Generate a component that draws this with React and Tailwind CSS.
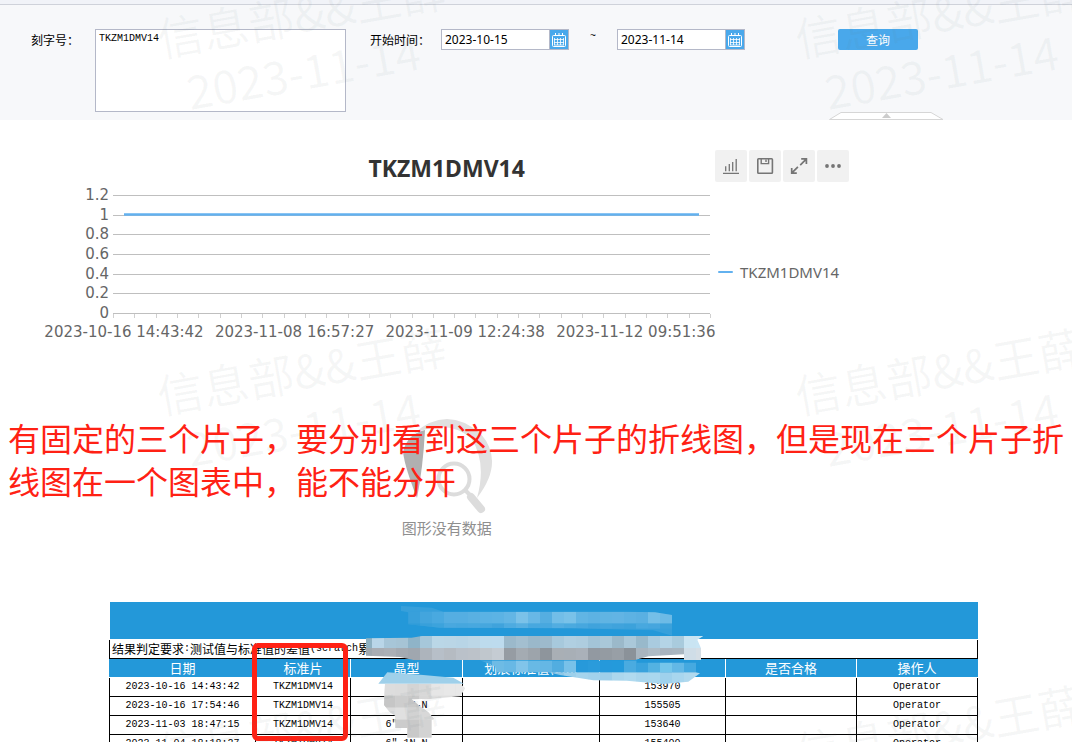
import React, { useState } from "react";

const axisLabels = [
  "2023-10-16 14:43:42",
  "2023-11-08 16:57:27",
  "2023-11-09 12:24:38",
  "2023-11-12 09:51:36",
];

const gridLines = [
  { value: "1.2", y: 13 },
  { value: "1", y: 33 },
  { value: "0.8", y: 52 },
  { value: "0.6", y: 72 },
  { value: "0.4", y: 92 },
  { value: "0.2", y: 111 },
  { value: "0", y: 131 },
];

const columns = ["日期", "标准片", "晶型", "划痕标准值(um)", "", "是否合格", "操作人"];

const records = [
  { date: "2023-10-16 14:43:42", piece: "TKZM1DMV14", type: "", value: "153970", user: "Operator" },
  { date: "2023-10-16 17:54:46", piece: "TKZM1DMV14", type: "6″ 1N-N", value: "155505", user: "Operator" },
  { date: "2023-11-03 18:47:15", piece: "TKZM1DMV14", type: "6″ 1N  ", value: "153640", user: "Operator" },
  { date: "2023-11-04 18:18:27", piece: "TKZM1DMV14", type: "6″ 1N-N", value: "155400", user: "Operator" },
];

const CalendarIcon = () => (
  <svg viewBox="0 0 14 14" className="h-[14px] w-[14px]" fill="none" stroke="#fff">
    <rect x="0.5" y="2.5" width="13" height="11" rx="1" />
    <path d="M3.5 0v3M7 0v3M10.5 0v3" />
    <path d="M2 6.5h10M2 9.5h10M2 12h10M2.5 5v7M5.5 5v7M8.5 5v7M11.5 5v7" strokeWidth="0.8" />
  </svg>
);

const DateField = ({ id, label, value, onChange }) => (
  <div className="flex h-[21px] w-32 border border-[#b4b8c8] bg-white">
    <input
      id={id}
      type="text"
      aria-label={label}
      value={value}
      onChange={(e) => onChange(e.target.value)}
      className="min-w-0 flex-1 px-[3px] font-['Noto_Sans'] text-xs text-black outline-none"
    />
    <button
      type="button"
      aria-label="选择日期"
      className="flex w-[19px] items-center justify-center border-l border-[#b4b8c8] bg-[#49a8eb]"
    >
      <CalendarIcon />
    </button>
  </div>
);

const ToolButton = ({ label, children }) => (
  <button type="button" aria-label={label} className="h-8 w-8 rounded-xs bg-[#f1f1f1]">
    <svg viewBox="0 0 32 32" className="h-8 w-8" fill="none" stroke="#757575" strokeWidth="1.4">
      {children}
    </svg>
  </button>
);

const Toolbar = () => (
  <div className="flex gap-[2px]">
    <ToolButton label="图表类型">
      <path d="M10.7 16.3v5M14.3 14v7.3M17.7 12v9.3M21.2 9v12.3M8 23.3h16" strokeWidth="1.3" />
    </ToolButton>
    <ToolButton label="导出图片">
      <rect x="8.8" y="8.8" width="14.6" height="14.4" rx="0.8" strokeWidth="1.6" />
      <path d="M12.2 9v4.6h7.4V9M17 9.5v2.6" />
    </ToolButton>
    <ToolButton label="全屏">
      <path d="M18.2 8.9h5.2v5.2M23.2 9.1l-6 6M13.8 23.1H8.7v-5.2M8.9 22.9l6-6" strokeWidth="1.7" />
    </ToolButton>
    <ToolButton label="更多">
      <g fill="#757575" stroke="none">
        <circle cx="10" cy="16" r="1.9" />
        <circle cx="16" cy="16" r="1.9" />
        <circle cx="22" cy="16" r="1.9" />
      </g>
    </ToolButton>
  </div>
);

const LineChart = () => (
  <svg viewBox="0 0 686 180" className="h-[180px] w-[686px] shrink-0 font-['DejaVu_Sans'] text-[15px]">
    {gridLines.map((line) => (
      <g key={line.value}>
        <rect x="81" y={line.y} width="597" height="1" fill="#bfbfbf" />
        <text x="77" y={line.y + 5} textAnchor="end" fill="#666">
          {line.value}
        </text>
      </g>
    ))}
    {Array.from({ length: 29 }).map((_, i) => (
      <rect key={i} x={81 + Math.round((i * 597) / 28)} y="132" width="1" height="4" fill="#d0d0d0" />
    ))}
    {axisLabels.map((label, i) => (
      <text key={label} x={92 + i * 170.6} y="155" textAnchor="middle" fill="#666">
        {label}
      </text>
    ))}
    <path d="M92 32.5H667" stroke="#62b1ef" strokeWidth="2.4" />
  </svg>
);

const EmptyChart = () => (
  <div className="flex flex-col items-center gap-1 pt-14">
    <svg viewBox="0 0 92 96" className="h-24 w-[92px]" fill="none">
      <path d="M2 34Q4 50 16 80Q22 50 24 12Q6 16 2 34Z" fill="#b0b0b0" />
      <path d="M12 16Q46-14 80 16Q104 44 76 80Q86 44 70 20Q46 0 12 16Z" fill="#e0e0e0" />
      <circle cx="53" cy="61" r="15.5" stroke="#dcdcdc" strokeWidth="4" />
      <path d="M64 72l6 6" stroke="#dcdcdc" strokeWidth="4" />
      <path d="M70 79l10 12" stroke="#dcdcdc" strokeWidth="8" strokeLinecap="round" />
    </svg>
    <p className="text-[15px] leading-5 text-[#8f8f8f]">图形没有数据</p>
  </div>
);

// one row of 36-unit blocks
const Blocks = ({ x, y, h = 36, colors }) =>
  colors.map((c, i) => <rect key={i} x={x + i * 36} y={y} width="36.5" height={h} fill={c} />);

// pixelated strips that hide parts of the table
const Mosaic = () => (
  <svg
    viewBox="0 0 1080 441"
    className="pointer-events-none absolute -top-[7px] left-[251px] h-[147px] w-[360px]"
    aria-hidden="true"
  >
    <defs>
      <clipPath id="m1">
        <path d="M123 33L215 38L250 50H800L885 52L936 60V122L880 106L640 100L240 98L145 88V52L123 48Z" />
      </clipPath>
      <clipPath id="m2">
        <path d="M18 130L155 128L190 122L1030 123L1012 134L1023 160V195H972V178L865 184L825 195H160L120 186L18 182Z" />
      </clipPath>
      <clipPath id="m3">
        <path d="M360 196H830V203H1008V232L1020 235L985 260L910 267L800 257L700 256L600 240L565 232H410L405 214Z" />
      </clipPath>
      <clipPath id="m4">
        <path d="M75 266L300 266L315 280L300 304L215 311L155 313L175 330L205 352L222 372L215 375V428H142V399H106V362L90 352L72 330Z" />
      </clipPath>
    </defs>
    <g clipPath="url(#m1)">
      <rect x="108" y="30" width="840" height="96" fill="#37a0db" />
      <Blocks
        x={144}
        y={50}
        colors={["#38a0db", "#43a5dd", "#49a9e0", "#55aee2", "#55aee2", "#59b0e2", "#5ab2e4", "#5cb3e4", "#63b6e5", "#7bc2e9", "#68b8e6", "#55aee1", "#72bee8", "#79c2e9", "#61b5e4", "#5db2e3", "#60b4e3", "#62b4e4", "#5db2e3", "#5ab0e2", "#74bfe8", "#6dbbe6"]}
      />
      <Blocks
        x={144}
        y={86}
        h={15}
        colors={["#2f9cd9", "#38a0da", "#3ca3dc", "#49a8df", "#46a7de", "#48a8df", "#46a7de", "#40a3dc", "#4eabe0", "#57afe1", "#48a8df", "#48a8df", "#52ade1", "#4baadf", "#47a7de", "#40a3dc", "#43a5dd", "#40a3dc", "#3ca2db", "#48a8df", "#46a6de", "#3ca2db"]}
      />
    </g>
    <g clipPath="url(#m2)">
      <Blocks
        x={0}
        y={123}
        colors={["#8eb1c2", "#b9d6e8", "#a7c6d8", "#a6c4d5", "#8fb4c8", "#a6c7da", "#bad7e7", "#bad6e6", "#b8d5e6", "#bcd7e7", "#bddbed", "#bddbee", "#9bb9cb", "#a3bfd0", "#9ab8ca", "#9dbacc", "#a7c9dc", "#b0cfe1", "#aecddf", "#a3c4d7", "#a9c8d9", "#9bb9ca", "#aac8d9", "#98b9cb", "#a9cbdf", "#b4d4e6", "#a9cbdd", "#c9e4f2", "#c9e5f4"]}
      />
      <Blocks
        x={0}
        y={159}
        colors={["#9fa8af", "#a9adb3", "#abb0b6", "#a4aab1", "#a0a7af", "#adb4bc", "#b7bfc8", "#b5bbc2", "#bac1c9", "#bcc2c9", "#c0c7cd", "#c5ccd3", "#969ca3", "#a4abb2", "#9da4ab", "#8e959c", "#a9afb5", "#a8afb6", "#aab1b9", "#9299a1", "#949ba2", "#989fa6", "#8b9299", "#a9b5bf", "#aebcc6", "#a8b4bf", "#a9b6c0", "#cfdde7", "#d5dee5"]}
      />
    </g>
    <g clipPath="url(#m3)">
      <Blocks
        x={360}
        y={196}
        colors={["#44a6de", "#6ebbe5", "#68b8e5", "#81c4ea", "#68b9e5", "#65b7e5", "#52ade0", "#78c1e9", "#2799da", "#2a9bdb", "#2599db", "#249adb", "#4aabe0", "#3aa3dd", "#53b2e2", "#74c6eb", "#63b8e6", "#45a9e0", "#45a9e0"]}
      />
      <Blocks
        x={360}
        y={232}
        colors={["#8bc5e6", "#8bc5e6", "#8bc5e6", "#8bc5e6", "#8bc5e6", "#8bc5e6", "#8fc8e7", "#9dd0eb", "#a5d4ed", "#a2d2ec", "#9ecfea", "#acd7ed", "#b0daef", "#a9d6ed", "#a9d7ee", "#9fd1ec", "#a8d6ee", "#b0d9ee", "#b0d9ee"]}
      />
    </g>
    <path d="M82 232L190 240L280 248L312 266H55Z" fill="#9fd0ea" />
    <g clipPath="url(#m4)">
      <rect x="60" y="260" width="270" height="180" fill="#dedede" />
      <Blocks x={70} y={266} colors={["#dddddd", "#dcdcdc", "#d4d4d4", "#d8d8d8", "#e6e6e6", "#e8e8e8", "#e8e8e8"]} />
      <Blocks x={70} y={302} colors={["#c6c6c6", "#cdcdcd", "#c9c9c9", "#d7d7d7"]} />
      <Blocks x={70} y={338} colors={["#dcdcdc", "#e0e0e0", "#d2d2d2", "#d8d8d8", "#dddddd"]} />
      <Blocks x={70} y={374} h={60} colors={["#d0d0d0", "#cccccc", "#c9c9c9", "#d3d3d3"]} />
    </g>
  </svg>
);

const Watermark = () => (
  <div aria-hidden="true" className="pointer-events-none absolute inset-0 overflow-hidden">
    <div className="-mt-4 grid grid-cols-[638px_638px] gap-y-[243px] pl-40">
      {[0, 1, 2, 3, 4, 5].map((i) => (
        <div key={i} className="h-[114px] w-[290px] -rotate-10 text-[46px] leading-[57px] text-[#64787d]/6">
          <p className="whitespace-nowrap">信息部&&王薛</p>
          <p className="pl-5 whitespace-nowrap">2023-11-14</p>
        </div>
      ))}
    </div>
  </div>
);

const RecordTable = () => (
  <div className="relative mt-16 mr-[94px] ml-[109px]">
    <table className="w-full table-fixed border-collapse text-center text-black">
      <colgroup>
        <col className="w-[146px]" />
        <col className="w-[95px]" />
        <col className="w-[112px]" />
        <col className="w-[137px]" />
        <col className="w-[126px]" />
        <col className="w-[131px]" />
        <col />
      </colgroup>
      <thead>
        <tr className="h-[37px]">
          <td colSpan={7} className="border-b border-white bg-[#2398d9]" />
        </tr>
        <tr className="h-[19px]">
          <td colSpan={7} className="border border-t-white border-black py-0 pr-0 pl-[2px] text-left text-xs">
            <div className="flex h-[18px] items-center leading-[18px]">
              结果判定要求<span className="font-['Liberation_Mono'] text-[10px]">:</span>测试值与标准值的差值
              <span className="font-['Liberation_Mono'] text-[10px]">(scratch</span>累
            </div>
          </td>
        </tr>
        <tr className="h-[19px] bg-[#2398d9] text-white">
          {columns.map((name, i) => (
            <th
              key={i}
              className="border-x border-b border-white p-0 text-[13px] leading-[18px] font-normal first:border-l-[#2398d9] last:border-r-[#2398d9]"
            >
              {name}
            </th>
          ))}
        </tr>
      </thead>
      <tbody className="font-['Liberation_Mono'] text-[10px] leading-4">
        {records.map((row) => (
          <tr key={row.date} className="h-[19px]">
            <td className="border border-black">{row.date}</td>
            <td className="border border-black">{row.piece}</td>
            <td className="border border-black whitespace-pre">{row.type}</td>
            <td className="border border-black" />
            <td className="border border-black">{row.value}</td>
            <td className="border border-black" />
            <td className="border border-black">{row.user}</td>
          </tr>
        ))}
      </tbody>
    </table>
    <Mosaic />
    <div className="absolute top-[41px] left-[143px] h-[98px] w-24 rounded-md border-[5px] border-[#ff2114]" />
  </div>
);

const App = () => {
  const [code, setCode] = useState("TKZM1DMV14");
  const [startDate, setStartDate] = useState("2023-10-15");
  const [endDate, setEndDate] = useState("2023-11-14");

  return (
    <div className="relative h-screen overflow-hidden bg-white font-['Noto_Sans_CJK_SC',sans-serif]">
      <header className="h-[5px] border-b border-[#cfd2da] bg-[#f1f3f8]" />
      <form className="bg-[#f7f8fa] pt-6 text-xs text-black" onSubmit={(e) => e.preventDefault()}>
        <div className="flex items-start pl-[31px]">
          <label htmlFor="code" className="w-16 leading-[22px]">
            刻字号：
          </label>
          <textarea
            id="code"
            value={code}
            onChange={(e) => setCode(e.target.value)}
            className="h-[83px] w-[251px] resize-none border border-[#b4b8c8] bg-white px-[3px] py-px font-['Liberation_Mono'] text-[10px] leading-4 outline-none"
          />
          <label htmlFor="start" className="ml-6 w-[71px] leading-[22px]">
            开始时间：
          </label>
          <DateField id="start" label="开始时间" value={startDate} onChange={setStartDate} />
          <span className="w-12 text-center font-['Liberation_Mono'] text-[10px] leading-4">~</span>
          <DateField id="end" label="结束时间" value={endDate} onChange={setEndDate} />
          <button type="submit" className="ml-[93px] h-[21px] w-20 rounded-xs bg-[#49a8eb] text-white">
            查询
          </button>
        </div>
        <div className="flex justify-end pr-32">
          <button type="button" aria-label="收起" className="h-2 w-[115px]">
            <svg viewBox="0 0 115 8" className="h-2 w-[115px]">
              <path d="M0.5 7.5L12 0.5H102L114 7.5Z" fill="#fff" stroke="#d6d6d6" />
              <path d="M53 6L57.500 1L62 6Z" fill="#cccccc" />
            </svg>
          </button>
        </div>
      </form>

      <section className="w-5/6 pt-[30px]">
        <div className="grid grid-cols-[1fr_auto_1fr] items-center">
          <h2 className="col-start-2 pt-1 font-['Noto_Sans'] text-[23px] leading-7 font-bold text-[#333]">
            TKZM1DMV14
          </h2>
          <div className="flex justify-end pr-11">
            <Toolbar />
          </div>
        </div>
        <div className="flex items-center pl-8">
          <LineChart />
          <div className="flex items-center gap-[7px] font-['Noto_Sans'] text-[15px] text-[#666]">
            <span className="h-[2px] w-[15px] rounded-xs bg-[#62b1ef]" />
            TKZM1DMV14
          </div>
        </div>
        <EmptyChart />
      </section>

      <RecordTable />
      <Watermark />

      <p className="absolute top-[416px] right-0 left-2 text-[32px] leading-[43px] text-[#ff2114]">
        有固定的三个片子，要分别看到这三个片子的折线图，但是现在三个片子折线图在一个图表中，能不能分开
      </p>
    </div>
  );
};

export default App;
